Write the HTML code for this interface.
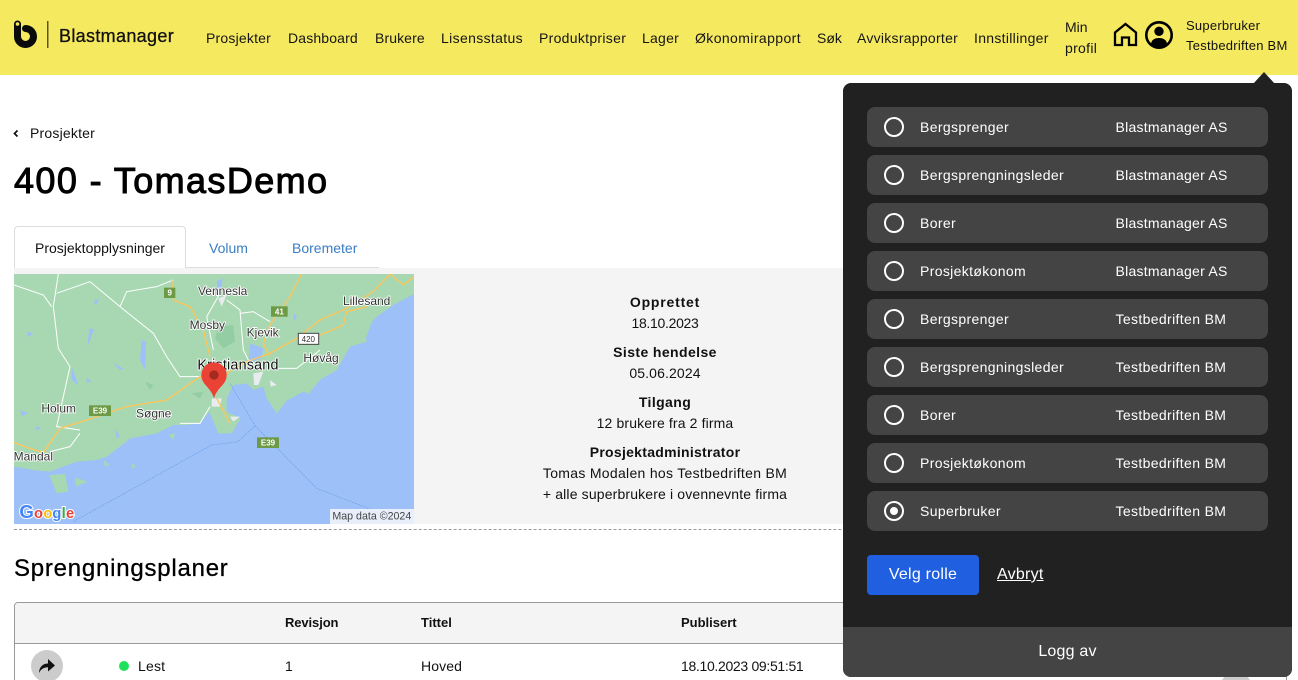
<!DOCTYPE html>
<html lang="no"><head><meta charset="utf-8"><title>Blastmanager</title>
<style>
*{box-sizing:border-box}
html,body{margin:0;padding:0;background:#fff;width:1298px;height:680px;overflow:hidden}
body{font-family:"Liberation Sans",sans-serif;color:#111;font-size:14px}
#w{position:relative;width:1298px;height:680px;overflow:hidden}
.t{position:absolute;white-space:nowrap;line-height:20px}
.hdr{position:absolute;left:0;top:0;width:1298px;height:75px;background:#f5e960}
.nav{top:28px;color:#151515}
.c{position:absolute;left:415px;width:500px;text-align:center;line-height:20px;white-space:nowrap;letter-spacing:.13px}
.c.b{font-weight:bold;letter-spacing:.4px}
.info{position:absolute;left:14px;top:268px;width:1273px;height:256px;background:#f4f4f4}
.panel{position:absolute;left:843px;top:83px;width:449px;height:594px;background:#212121;border-radius:8px;overflow:hidden}
.row{position:absolute;left:24px;width:401px;height:40px;background:#444;border-radius:8px;color:#fff}
.row i{position:absolute;left:17px;top:10px;width:20px;height:20px;border:2px solid #fff;border-radius:50%}
.row i.on:after{content:"";position:absolute;left:4px;top:4px;width:8px;height:8px;border-radius:50%;background:#fff}
.row span{position:absolute;top:10px;line-height:20px;white-space:nowrap}
.row .a{left:53px;letter-spacing:.35px}
.row .b{left:248.500px;letter-spacing:.26px}
.row .d{left:248.500px;letter-spacing:.36px}
</style></head><body><div id="w">
<div class="hdr"></div>
<svg style="position:absolute;left:0;top:0" width="60" height="60" viewBox="0 0 60 60">
<path d="M17.500 24V36.500A8 8 0 1 0 25.500 28.500" fill="none" stroke="#0b0b0b" stroke-width="7" stroke-linecap="round"/>
<circle cx="17.500" cy="24.500" r="3.500" fill="#0b0b0b"/><circle cx="17.500" cy="24" r="1.800" fill="#f5e960"/>
<rect x="47" y="21" width="1.500" height="27" fill="#5a5520"/></svg>
<div class="t" style="left:59px;top:26px;font-size:18px;letter-spacing:.33px;-webkit-text-stroke:.3px #111">Blastmanager</div>
<div class="t nav" style="left:206px;letter-spacing:.2px">Prosjekter</div>
<div class="t nav" style="left:288px;letter-spacing:.15px">Dashboard</div>
<div class="t nav" style="left:375px;letter-spacing:.1px">Brukere</div>
<div class="t nav" style="left:441px;letter-spacing:.35px">Lisensstatus</div>
<div class="t nav" style="left:539px;letter-spacing:.3px">Produktpriser</div>
<div class="t nav" style="left:642px;letter-spacing:.24px">Lager</div>
<div class="t nav" style="left:695px;letter-spacing:.4px">Økonomirapport</div>
<div class="t nav" style="left:817px">Søk</div>
<div class="t nav" style="left:857px;letter-spacing:.27px">Avviksrapporter</div>
<div class="t nav" style="left:974px;letter-spacing:.3px">Innstillinger</div>
<div class="t nav" style="left:1065px;top:17px">Min</div>
<div class="t nav" style="left:1065px;top:38px;letter-spacing:.3px">profil</div>
<svg style="position:absolute;left:1110px;top:20px" width="64" height="30" viewBox="0 0 64 30">
<path d="M5 12.500L15.500 4L26 12.500V25H19V17.500H12V25H5Z" fill="none" stroke="#000" stroke-width="2.300" stroke-linejoin="miter"/>
<circle cx="49" cy="15" r="12.700" fill="none" stroke="#000" stroke-width="2.600"/>
<circle cx="49" cy="11.300" r="4.700" fill="#000"/>
<path d="M41 24C41.500 19.500 45 18 49 18S56.500 19.500 57 24A12 12 0 0 1 41 24Z" fill="#000"/></svg>
<div class="t" style="left:1186px;top:16px;font-size:13px;letter-spacing:.24px">Superbruker</div>
<div class="t" style="left:1186px;top:36px;font-size:13px;letter-spacing:.25px">Testbedriften BM</div>

<svg style="position:absolute;left:12px;top:128px" width="10" height="12" viewBox="0 0 10 12"><path d="M5.500 2.500L2.500 5.500L5.500 8.500" fill="none" stroke="#111" stroke-width="1.700"/></svg>
<div class="t" style="left:30px;top:123px;letter-spacing:.2px">Prosjekter</div>
<div class="t" style="left:14px;top:159px;font-size:36px;line-height:44px;letter-spacing:1.4px;-webkit-text-stroke:1px #000;color:#000">400 - TomasDemo</div>

<div style="position:absolute;left:14px;top:267px;width:365px;height:1px;background:#ddd"></div>
<div style="position:absolute;left:14px;top:226px;width:172px;height:42px;background:#fff;border:1px solid #ddd;border-bottom:0;border-radius:4px 4px 0 0"></div>
<div class="t" style="left:35px;top:238px">Prosjektopplysninger</div>
<div class="t" style="left:209px;top:238px;color:#3a7ec4">Volum</div>
<div class="t" style="left:292px;top:238px;color:#3a7ec4">Boremeter</div>

<div class="info"></div>
<svg style="position:absolute;left:0;top:270px" width="420" height="260" viewBox="0 0 1260 780" font-family="'Liberation Sans',sans-serif">
<defs><clipPath id="m"><rect x="42" y="12" width="1200" height="750"/></clipPath></defs>
<g clip-path="url(#m)">
<rect x="42" y="12" width="1200" height="750" fill="#9cc0f7"/>
<path d="M42 12H1242V72L1180 105L1130 140L1092 180L1100 215L1050 230L1010 300L960 330L925 372L910 365L860 392L830 430L800 385L790 350L760 360L740 340L700 345L680 385L680 425L722 445L695 490L655 490L628 425L600 460L560 465L520 465L470 490L390 505L360 530L320 560L290 570L230 575L150 605L100 600L42 590Z" fill="#a8d8b2"/>
<path d="M148 615L195 612L205 665L170 670ZM225 622L262 635L228 650ZM312 570L328 585L314 590ZM1065 155L1118 148L1095 212L1068 212ZM395 580L410 590L395 595ZM505 495L525 490L520 510ZM1010 215L1050 225L1020 245L1000 240Z" fill="#a8d8b2"/>
<path d="M655 170L700 165L705 215L670 235L645 205ZM435 335L460 345L450 360ZM575 370L610 365L600 385Z" fill="#95cda3"/>
<path d="M750 220L790 235L785 265L745 280ZM280 95L298 85L288 105ZM268 175L282 178L262 230ZM425 210L438 215L435 300L420 270ZM340 280L370 295L360 300ZM80 185L100 190L85 200ZM880 130L892 140L880 155ZM650 35L668 25L658 90ZM60 420L85 430L65 438ZM215 290L235 345L215 330ZM258 325L275 332L262 340ZM345 475L360 500L350 505ZM110 470L125 475L105 480Z" fill="#9cc0f7"/>
<path d="M760 310L790 305L775 345L762 345ZM635 385L665 385L660 410L635 410ZM690 440L720 440L700 455ZM810 330L830 345L812 350ZM655 85L680 75L665 110Z" fill="#e8ecef"/>
<g fill="none" stroke="#fff" stroke-width="3">
<path d="M175 12L160 110L175 235L210 290L190 380L170 470L240 480M42 45L130 75L155 110M170 70L270 35L360 110L460 190L500 260L540 320L600 320M360 110L380 65L470 50L520 30M660 70L620 140L640 240M680 90L720 120L730 240L750 280M720 130L760 125L810 155M540 460L600 460L630 410M240 490L210 530L150 545M810 295L890 295L960 240"/>
</g>
<g fill="none" stroke="#fdc55a" stroke-width="4">
<path d="M42 518L90 535L130 548L180 475L260 450L380 410L500 390L600 320L680 310L740 275L810 250L890 205L960 150L1040 115L1120 65L1170 12"/>
<path d="M515 30L520 90L570 110L610 180L630 260M905 12L870 80L810 165L790 220L810 260M960 195L1030 165L1040 125L1100 110M650 385L690 460M1170 12L1210 45L1242 20"/>
</g>
<path d="M220 755L635 525L715 515L765 467L690 340M765 467L950 655L1130 725" fill="none" stroke="#6f9fe8" stroke-width="2" stroke-dasharray="6 3"/>
<g font-size="36" fill="#333" stroke="#fff" stroke-width="5" paint-order="stroke" text-anchor="middle">
<text x="668" y="75">Vennesla</text><text x="1100" y="105">Lillesand</text>
<text x="622" y="177">Mosby</text><text x="788" y="200">Kjevik</text>
<text x="963" y="276">Høvåg</text><text x="176" y="428">Holum</text>
<text x="461" y="442">Søgne</text><text x="100" y="572">Mandal</text>
<text x="714" y="299" font-size="43" letter-spacing=".6" fill="#111">Kristiansand</text></g>
<g font-size="24" font-weight="bold" fill="#fff" text-anchor="middle">
<rect x="492" y="53" width="34" height="31" fill="#6c9a45"/><text x="509" y="77">9</text>
<rect x="813" y="109" width="50" height="31" fill="#6c9a45"/><text x="838" y="134">41</text>
<rect x="267" y="406" width="66" height="32" fill="#6c9a45"/><text x="300" y="431">E39</text>
<rect x="771" y="502" width="66" height="32" fill="#6c9a45"/><text x="804" y="527">E39</text>
<rect x="895" y="190" width="61" height="33" fill="#fff" stroke="#444" stroke-width="3"/><text x="925" y="216" fill="#333" font-weight="normal">420</text></g>
<path d="M642 385C632 350 604 345 604 315A38 38 0 0 1 680 315C680 345 652 350 642 385Z" fill="#ea4335"/>
<circle cx="642" cy="315" r="14" fill="#a52a20"/>
<rect x="990" y="717" width="252" height="45" fill="#f1f4fb" opacity=".9"/>
<text x="997" y="749" font-size="32" fill="#444">Map data ©2024</text>
<g font-size="44" stroke="#fff" stroke-width="6" paint-order="stroke" font-weight="bold">
<text x="58" y="744" fill="#4285f4" font-size="56">G</text><text x="102" y="744" fill="#ea4335">o</text><text x="130" y="744" fill="#fbbc05">o</text><text x="157" y="744" fill="#4285f4">g</text><text x="185" y="744" fill="#34a853">l</text><text x="198" y="744" fill="#ea4335">e</text></g>
</g></svg>
<div class="c b" style="top:292px;letter-spacing:.8px">Opprettet</div><div class="c" style="top:313px;letter-spacing:-.3px">18.10.2023</div>
<div class="c b" style="top:342px">Siste hendelse</div><div class="c" style="top:363px">05.06.2024</div>
<div class="c b" style="top:392px">Tilgang</div><div class="c" style="top:413px">12 brukere fra 2 firma</div>
<div class="c b" style="top:442px;letter-spacing:.28px">Prosjektadministrator</div><div class="c" style="top:463px;letter-spacing:.3px">Tomas Modalen hos Testbedriften BM</div>
<div class="c" style="top:484px;letter-spacing:.15px">+ alle superbrukere i ovennevnte firma</div>
<div style="position:absolute;left:14px;top:529px;width:1272px;border-top:1px dashed #999"></div>

<div class="t" style="left:14px;top:554px;font-size:24px;line-height:30px;letter-spacing:.77px;-webkit-text-stroke:.3px #000;color:#000">Sprengningsplaner</div>
<div style="position:absolute;left:14px;top:602px;width:1273px;height:100px;border:1px solid #999;border-radius:4px 4px 0 0;background:#fff"></div>
<div style="position:absolute;left:15px;top:603px;width:1271px;height:41px;background:#f4f4f4;border-bottom:1px solid #999;border-radius:3px 3px 0 0"></div>
<div class="t" style="left:285px;top:613px;font-size:13px;font-weight:bold;letter-spacing:-.1px">Revisjon</div>
<div class="t" style="left:421px;top:613px;font-size:13px;font-weight:bold">Tittel</div>
<div class="t" style="left:681px;top:613px;font-size:13px;font-weight:bold">Publisert</div>
<div style="position:absolute;left:31px;top:650px;width:32px;height:32px;border-radius:50%;background:#ccc"></div>
<svg style="position:absolute;left:37px;top:656px" width="20" height="20" viewBox="0 0 20 20"><path d="M2 17C2 11 6 7.500 11 7.500V3L18 9.500L11 15.500V11.300C7 11.300 4 13 2 17Z" fill="#111"/></svg>
<div style="position:absolute;left:119px;top:661px;width:10px;height:10px;border-radius:50%;background:#1fe05a"></div>
<div class="t" style="left:138px;top:656px;letter-spacing:.2px">Lest</div>
<div class="t" style="left:285px;top:656px">1</div>
<div class="t" style="left:421px;top:656px;letter-spacing:.1px">Hoved</div>
<div class="t" style="left:681px;top:656px;letter-spacing:-.32px">18.10.2023 09:51:51</div>
<div style="position:absolute;left:1220px;top:672px;width:32px;height:32px;border-radius:50%;background:#ccc"></div>

<svg style="position:absolute;left:1250px;top:72px" width="28" height="12" viewBox="0 0 28 12"><path d="M14 0L25 12H3Z" fill="#212121"/></svg>
<div class="panel">
<div class="row" style="top:24px"><i></i><span class="a">Bergsprenger</span><span class="b">Blastmanager AS</span></div>
<div class="row" style="top:72px"><i></i><span class="a">Bergsprengningsleder</span><span class="b">Blastmanager AS</span></div>
<div class="row" style="top:120px"><i></i><span class="a">Borer</span><span class="b">Blastmanager AS</span></div>
<div class="row" style="top:168px"><i></i><span class="a">Prosjektøkonom</span><span class="b">Blastmanager AS</span></div>
<div class="row" style="top:216px"><i></i><span class="a">Bergsprenger</span><span class="d">Testbedriften BM</span></div>
<div class="row" style="top:264px"><i></i><span class="a">Bergsprengningsleder</span><span class="d">Testbedriften BM</span></div>
<div class="row" style="top:312px"><i></i><span class="a">Borer</span><span class="d">Testbedriften BM</span></div>
<div class="row" style="top:360px"><i></i><span class="a">Prosjektøkonom</span><span class="d">Testbedriften BM</span></div>
<div class="row" style="top:408px"><i class="on"></i><span class="a">Superbruker</span><span class="d">Testbedriften BM</span></div>
<div style="position:absolute;left:24px;top:472px;width:112px;height:40px;background:#2060e0;border-radius:4px;color:#fff;text-align:center;line-height:39px;font-size:16px;letter-spacing:.25px">Velg rolle</div>
<div class="t" style="left:154px;top:482px;color:#fff;font-size:16px;text-decoration:underline;letter-spacing:.25px">Avbryt</div>
<div style="position:absolute;left:0;top:544px;width:449px;height:50px;background:#444;color:#fff;text-align:center;line-height:49px;font-size:16px;letter-spacing:.2px">Logg av</div>
</div>
</div></body></html>
